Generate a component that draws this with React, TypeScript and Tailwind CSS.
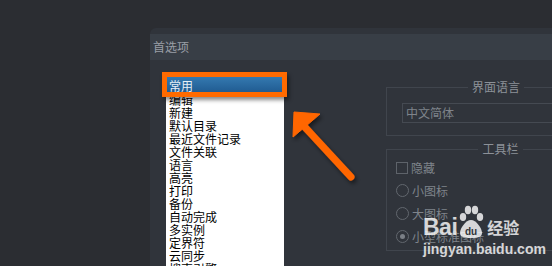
const items = [
  "编辑",
  "新建",
  "默认目录",
  "最近文件记录",
  "文件关联",
  "语言",
  "高亮",
  "打印",
  "备份",
  "自动完成",
  "多实例",
  "定界符",
  "云同步",
  "搜索引擎",
];

function Radio({ checked, label }: { checked?: boolean; label: string }) {
  return (
    <div className="flex h-[23px] items-center gap-[3px]">
      <span className="flex h-[13px] w-[13px] items-center justify-center rounded-full border-[1.5px] border-[#62676e]">
        {checked && <span className="h-[5px] w-[5px] rounded-full bg-[#7a7f86]" />}
      </span>
      <span>{label}</span>
    </div>
  );
}

function Watermark() {
  return (
    <div className="pointer-events-none absolute left-[423px] top-[205px] flex flex-col text-white/80">
      <div className="flex items-end">
        <span className="font-['Liberation_Sans'] text-[23px] font-bold leading-[26px] tracking-[-0.5px]">Bai</span>
        <svg width="26" height="34" viewBox="0 0 26 34" className="mb-[1px] ml-[1px]">
          <ellipse cx="5" cy="12" rx="3.2" ry="4" fill="currentColor" />
          <ellipse cx="10" cy="5" rx="3.2" ry="4.2" fill="currentColor" />
          <ellipse cx="17" cy="5" rx="3.2" ry="4.2" fill="currentColor" />
          <ellipse cx="22" cy="12" rx="3.2" ry="4" fill="currentColor" />
          <path d="M13 15c-5 0-11 8-11 13 0 4 4 5 11 5s11-1 11-5c0-5-6-13-11-13z" fill="currentColor" />
          <text x="13" y="30" textAnchor="middle" fontFamily="Liberation Sans" fontWeight="700" fontSize="10" fill="#30343b">
            du
          </text>
        </svg>
        <span className="ml-[3px] font-['Noto_Sans_CJK_SC'] text-[16px] font-bold leading-[26px]">经验</span>
      </div>
      <span className="mt-[2px] font-['Liberation_Sans'] text-[14px] font-semibold leading-[14px]">jingyan.baidu.com</span>
    </div>
  );
}

export default function App() {
  return (
    <div className="relative h-[266px] w-[552px] overflow-hidden bg-[#2b2d32] pl-[150px] pt-[28px] font-['Noto_Sans_CJK_SC',sans-serif] text-[12px]">
      <div className="h-[238px] w-[480px] rounded-tl-[6px] bg-[#30343b] pt-[6px]">
        <div className="flex h-[26px] items-center bg-[#383e46] pl-[3px] text-[#9a9fa6]">首选项</div>

        <div className="flex pl-[16px] pt-[17px]">
          <div className="relative h-[200px] w-[118px] shrink-0 bg-white leading-[13px] text-black">
            <div className="flex h-[16px] items-center bg-gradient-to-b from-[#3479b0] to-[#1f5a90] pl-[3px] text-[#e6eef6]">
              常用
            </div>
            {items.map((it) => (
              <div key={it} className="h-[13px] whitespace-nowrap pl-[3px]">
                {it}
              </div>
            ))}
            <div className="absolute -left-[4px] -top-[5px] h-[25px] w-[125px] border-[5px] border-[#ff6a00] shadow-[2px_3px_4px_rgba(0,0,0,0.45)]" />
          </div>

          <div className="ml-[102px] flex w-[220px] shrink-0 flex-col text-[#7f848b]">
            <fieldset className="mt-[3px] border border-[#40454d] pb-[12px]">
              <legend className="mx-auto px-[4px] leading-[14px] text-[#8c9198]">界面语言</legend>
              <div className="ml-[15px] mt-[9px] flex h-[20px] w-[200px] items-center border border-[#454a52] pl-[3px]">
                中文简体
              </div>
            </fieldset>

            <fieldset className="mt-[6px] border border-[#40454d] pb-[2px] pl-[9px]">
              <legend className="mx-auto px-[4px] leading-[14px] text-[#8c9198]">工具栏</legend>
              <div className="flex h-[23px] items-center gap-[3px]">
                <span className="h-[12px] w-[12px] border border-[#5e636a]" />
                <span>隐藏</span>
              </div>
              <Radio label="小图标" />
              <Radio label="大图标" />
              <Radio checked label="小型标准图标" />
            </fieldset>
          </div>
        </div>
      </div>

      <svg className="pointer-events-none absolute left-[285px] top-[105px]" width="80" height="85" viewBox="285 105 80 85">
        <defs>
          <filter id="sh" x="-30%" y="-30%" width="160%" height="160%">
            <feDropShadow dx="2" dy="3" stdDeviation="2" floodColor="#000" floodOpacity="0.5" />
          </filter>
        </defs>
        <g filter="url(#sh)" fill="#ff6600" stroke="#ff6600">
          <polygon points="294,112 320,114 293,137" strokeWidth="1" strokeLinejoin="round" />
          <line x1="302" y1="124" x2="351" y2="177" strokeWidth="7" strokeLinecap="round" />
        </g>
      </svg>

      <Watermark />
    </div>
  );
}
